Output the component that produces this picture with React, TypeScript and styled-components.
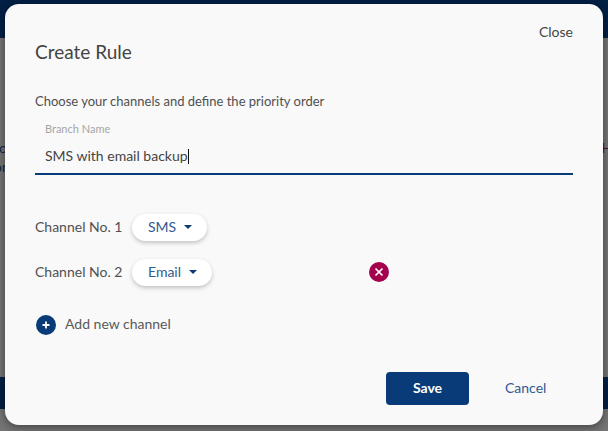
import React from 'react';
import styled, { createGlobalStyle } from 'styled-components';

const GlobalStyle = createGlobalStyle`
  html, body {
    margin: 0;
    height: 100%;
    overflow: hidden;
    font-family: Lato, "Open Sans", sans-serif;
  }
  #root {
    height: 100%;
  }
`;

const Page = styled.div`
  position: relative;
  width: 608px;
  height: 431px;
  overflow: hidden;
  display: flex;
  flex-direction: column;
  background: #747474;
`;

const TopBar = styled.div`
  height: 38px;
  background: #021f44;
`;

const PageBody = styled.div`
  height: 339px;
  display: flex;
  justify-content: space-between;
  padding-top: 100px;
  box-sizing: border-box;
  font-size: 14px;
  line-height: 19px;
`;

const BehindLeft = styled.div`
  margin-left: -6px;
  color: #0f2a4e;
`;

const BehindRight = styled.div`
  margin-right: -4px;
  color: #4e1030;
`;

const BottomBar = styled.div`
  height: 32px;
  background: #021f44;
`;

const Modal = styled.div`
  position: absolute;
  left: 5px;
  top: 4px;
  width: 598px;
  height: 421px;
  box-sizing: border-box;
  padding: 21px 30px 0 30px;
  background: #f9f9f9;
  border-radius: 14px;
  box-shadow: 0 2px 8px rgba(0, 0, 0, 0.45);
  display: flex;
  flex-direction: column;
`;

const CloseRow = styled.div`
  display: flex;
  justify-content: flex-end;
  height: 14px;
`;

const CloseLink = styled.span`
  font-size: 14px;
  line-height: 14px;
  color: #444;
`;

const Title = styled.h2`
  margin: 1px 0 0;
  font-size: 19px;
  line-height: 24px;
  font-weight: 400;
  color: #444;
`;

const Intro = styled.p`
  margin: 29px 0 0;
  font-size: 13px;
  line-height: 16px;
  color: #505050;
`;

const Field = styled.div`
  margin-top: 11px;
  height: 55px;
  box-sizing: border-box;
  padding: 2px 10px 0;
  border-bottom: 2px solid #083b77;
`;

const FieldLabel = styled.div`
  font-size: 11px;
  line-height: 14px;
  color: #a6a6a6;
`;

const FieldValue = styled.div`
  margin-top: 11px;
  display: flex;
  align-items: center;
  font-size: 14px;
  line-height: 18px;
  color: #444;
`;

const Caret = styled.span`
  width: 1px;
  height: 15px;
  background: #111;
`;

const Channels = styled.div`
  margin-top: 39px;
  display: flex;
  flex-direction: column;
  gap: 18px;
`;

const ChannelRow = styled.div`
  display: flex;
  align-items: center;
  height: 27px;
`;

const ChannelLabel = styled.span`
  width: 97px;
  margin-bottom: 2px;
  font-size: 14px;
  color: #505050;
`;

const Pill = styled.div<{ $width: number }>`
  width: ${(p) => p.$width}px;
  height: 27px;
  box-sizing: border-box;
  padding: 0 0 2px 16px;
  display: flex;
  align-items: center;
  gap: 8px;
  background: #fff;
  border-radius: 14px;
  box-shadow: 0 2px 4px rgba(0, 0, 0, 0.22);
  font-size: 14px;
  color: #2f5a91;
`;

const ArrowDown = styled.span`
  width: 0;
  height: 0;
  border-left: 4px solid transparent;
  border-right: 4px solid transparent;
  border-top: 4px solid #083b77;
`;

const RemoveButton = styled.button`
  width: 20px;
  height: 20px;
  margin: -1px 0 0 157px;
  padding: 0;
  border: 0;
  border-radius: 50%;
  background: #a3004e;
  display: flex;
  align-items: center;
  justify-content: center;
`;

const AddRow = styled.div`
  margin-top: 29px;
  height: 20px;
  display: flex;
  align-items: center;
  gap: 9px;
  font-size: 14px;
  color: #5a5a5a;
`;

const AddIcon = styled.span`
  width: 20px;
  height: 20px;
  margin-left: 1px;
  border-radius: 50%;
  background: #083b77;
  display: flex;
  align-items: center;
  justify-content: center;
`;

const AddLabel = styled.span`
  margin-bottom: 3px;
`;

const Actions = styled.div`
  margin-top: 37px;
  margin-left: 351px;
  display: flex;
  align-items: center;
`;

const SaveButton = styled.button`
  width: 83px;
  height: 33px;
  padding: 0 0 2px;
  border: 0;
  border-radius: 4px;
  background: #083b77;
  color: #fff;
  font-family: inherit;
  font-size: 14px;
  font-weight: 700;
`;

const CancelLink = styled.span`
  margin: 0 0 2px 36px;
  font-size: 14px;
  color: #2f5a91;
`;

export default function App(): React.ReactElement {
  return (
    <>
      <GlobalStyle />
      <Page>
        <TopBar />
        <PageBody>
          <BehindLeft>
            to
            <br />
            on
          </BehindLeft>
          <BehindRight>H</BehindRight>
        </PageBody>
        <BottomBar />
        <Modal>
          <CloseRow>
            <CloseLink>Close</CloseLink>
          </CloseRow>
          <Title>Create Rule</Title>
          <Intro>Choose your channels and define the priority order</Intro>
          <Field>
            <FieldLabel>Branch Name</FieldLabel>
            <FieldValue>
              SMS with email backup
              <Caret />
            </FieldValue>
          </Field>
          <Channels>
            <ChannelRow>
              <ChannelLabel>Channel No. 1</ChannelLabel>
              <Pill $width={75}>
                SMS
                <ArrowDown />
              </Pill>
            </ChannelRow>
            <ChannelRow>
              <ChannelLabel>Channel No. 2</ChannelLabel>
              <Pill $width={80}>
                Email
                <ArrowDown />
              </Pill>
              <RemoveButton>
                <svg width="10" height="10" viewBox="0 0 10 10">
                  <path d="M1.5 1.5 L8.5 8.5 M8.5 1.5 L1.5 8.5" stroke="#fff" strokeWidth="1.7" />
                </svg>
              </RemoveButton>
            </ChannelRow>
          </Channels>
          <AddRow>
            <AddIcon>
              <svg width="10" height="10" viewBox="0 0 10 10">
                <path d="M5 1.5 V8.5 M1.5 5 H8.5" stroke="#fff" strokeWidth="1.8" />
              </svg>
            </AddIcon>
            <AddLabel>Add new channel</AddLabel>
          </AddRow>
          <Actions>
            <SaveButton>Save</SaveButton>
            <CancelLink>Cancel</CancelLink>
          </Actions>
        </Modal>
      </Page>
    </>
  );
}
